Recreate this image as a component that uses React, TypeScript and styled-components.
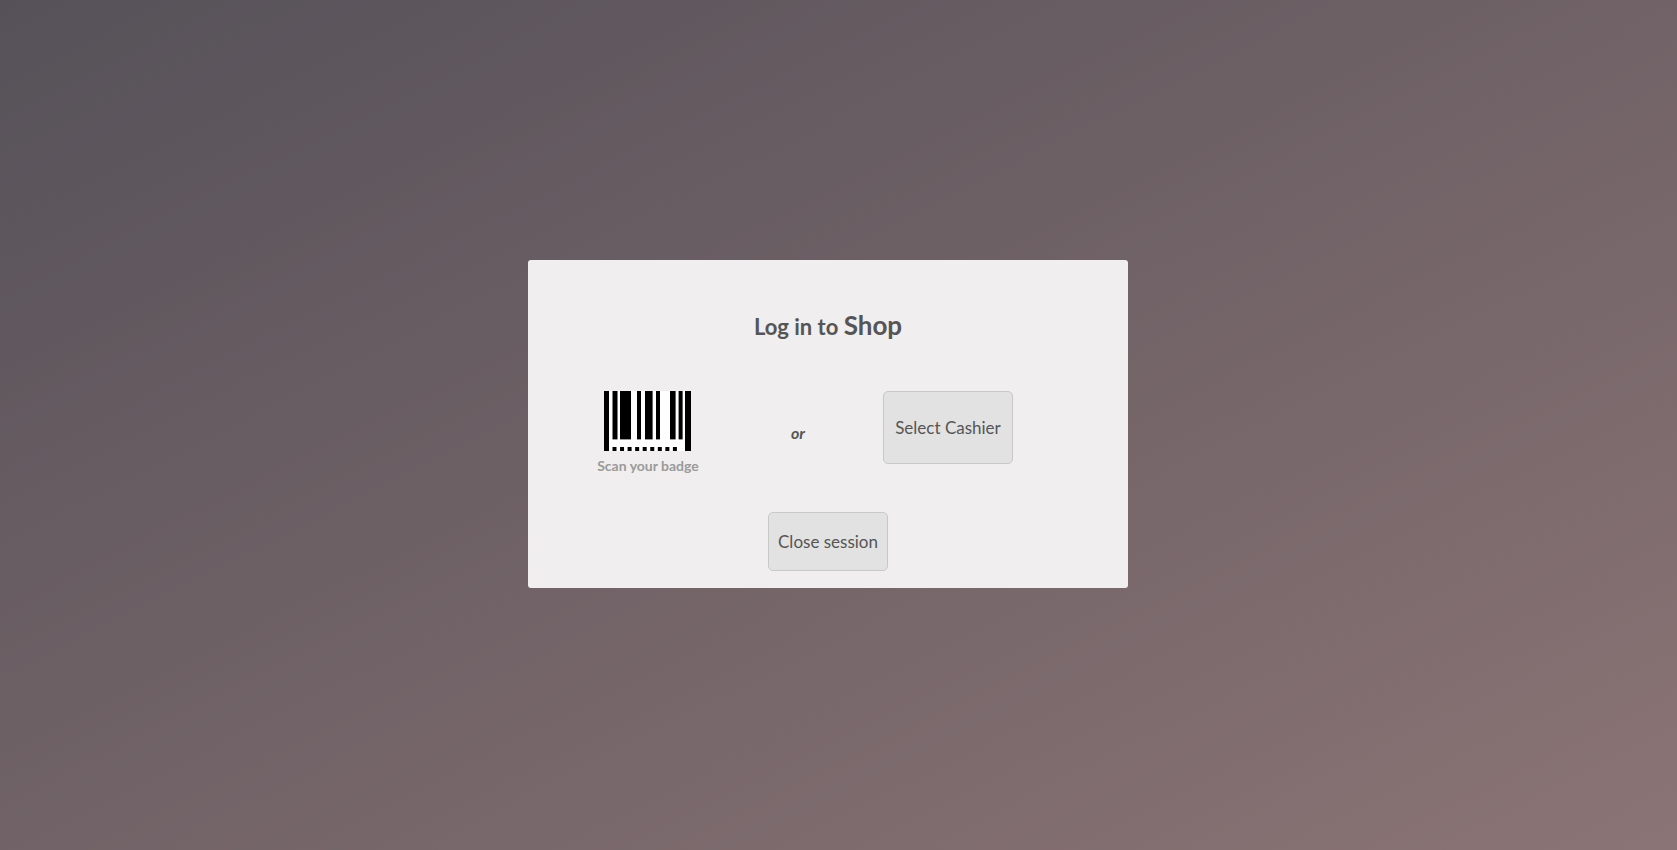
import React from "react";
import styled, { createGlobalStyle } from "styled-components";

const GlobalStyle = createGlobalStyle`
  * { box-sizing: border-box; }
  body {
    margin: 0;
    color: #555;
    font-family: Lato, "Open Sans", sans-serif;
    font-size: 16px;
  }
`;

const Screen = styled.main`
  display: flex;
  align-items: center;
  justify-content: center;
  min-height: 100vh;
  padding: 0 21px 2px 0;
  background: linear-gradient(to right bottom, #565159, #8b7475);
`;

const LoginCard = styled.section`
  width: 100%;
  max-width: 600px;
  padding: 48px 0 17px;
  border-radius: 3px;
  background: #f0eeee;
  text-align: center;
`;

const Title = styled.h1`
  margin: 0;
  font-size: 22px;
  line-height: 35px;
  font-weight: 700;
`;

const ShopName = styled.span`
  font-size: 26px;
`;

const Options = styled.div`
  display: grid;
  grid-template-columns: repeat(3, 1fr);
  width: 75%;
  margin: 47px 0 37px 45px;
  justify-items: center;
`;

const Badge = styled.div`
  display: flex;
  flex-direction: column;
  align-items: center;
`;

const Caption = styled.span`
  margin-top: 6px;
  color: #9a9a9a;
  font-size: 14px;
  line-height: 18px;
  font-weight: 700;
`;

const Separator = styled.em`
  margin-top: 32px;
  font-size: 16px;
  line-height: 20px;
  font-weight: 700;
`;

const Button = styled.button<{ $tall?: boolean }>`
  height: ${(p) => (p.$tall ? 73 : 59)}px;
  padding: 0 ${(p) => (p.$tall ? 11 : 9)}px;
  border: 1px solid #c8c8c8;
  border-radius: 5px;
  background: #e2e2e2;
  color: #555;
  font-family: inherit;
  font-size: 17px;
  white-space: nowrap;
  cursor: pointer;
`;

const bars = [
  [8.5, 5],
  [16, 11],
  [33, 4],
  [41, 7.6],
  [52, 4],
  [66, 5.6],
  [74.6, 4],
];

const Barcode = () => (
  <svg width="87" height="60" viewBox="0 0 87 60" aria-hidden="true">
    <rect width="87" height="60" fill="#fff" />
    <rect width="5" height="60" />
    <rect x="81" width="6" height="60" />
    {bars.map(([x, w]) => (
      <rect key={x} x={x} width={w} height="48.4" />
    ))}
    {Array.from({ length: 9 }, (_, i) => (
      <rect key={i} x={8.5 + i * 7.55} y="56" width="4" height="4" />
    ))}
  </svg>
);

export default function App() {
  return (
    <>
      <GlobalStyle />
      <Screen>
        <LoginCard>
          <Title>
            Log in to <ShopName>Shop</ShopName>
          </Title>
          <Options>
            <Badge>
              <Barcode />
              <Caption>Scan your badge</Caption>
            </Badge>
            <Separator>or</Separator>
            <Button type="button" $tall>
              Select Cashier
            </Button>
          </Options>
          <Button type="button">Close session</Button>
        </LoginCard>
      </Screen>
    </>
  );
}
